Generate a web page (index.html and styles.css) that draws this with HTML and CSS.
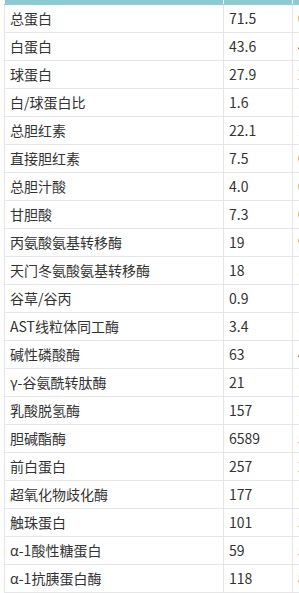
FILE: index.html
```html
<!DOCTYPE html>
<html lang="zh">
<head>
<meta charset="utf-8">
<link rel="stylesheet" href="styles.css">
</head>
<body>
<div class="viewport">
<table class="grid">
<thead>
<tr class="head"><th class="c-name"></th><th class="c-val"></th><th class="c-ref"></th></tr>
</thead>
<tbody>
<tr><td class="c-name">总蛋白</td><td class="c-val">71.5</td><td class="c-ref">0</td></tr>
<tr><td class="c-name">白蛋白</td><td class="c-val">43.6</td><td class="c-ref">4</td></tr>
<tr><td class="c-name">球蛋白</td><td class="c-val">27.9</td><td class="c-ref">2</td></tr>
<tr><td class="c-name">白/球蛋白比</td><td class="c-val">1.6</td><td class="c-ref">1</td></tr>
<tr><td class="c-name">总胆红素</td><td class="c-val">22.1</td><td class="c-ref">1</td></tr>
<tr><td class="c-name">直接胆红素</td><td class="c-val">7.5</td><td class="c-ref">0</td></tr>
<tr><td class="c-name">总胆汁酸</td><td class="c-val">4.0</td><td class="c-ref">0</td></tr>
<tr><td class="c-name">甘胆酸</td><td class="c-val">7.3</td><td class="c-ref">0</td></tr>
<tr><td class="c-name">丙氨酸氨基转移酶</td><td class="c-val">19</td><td class="c-ref">9</td></tr>
<tr><td class="c-name">天门冬氨酸氨基转移酶</td><td class="c-val">18</td><td class="c-ref">1</td></tr>
<tr><td class="c-name">谷草/谷丙</td><td class="c-val">0.9</td><td class="c-ref"></td></tr>
<tr><td class="c-name">AST线粒体同工酶</td><td class="c-val">3.4</td><td class="c-ref">1</td></tr>
<tr><td class="c-name">碱性磷酸酶</td><td class="c-val">63</td><td class="c-ref">4</td></tr>
<tr><td class="c-name">γ-谷氨酰转肽酶</td><td class="c-val">21</td><td class="c-ref">1</td></tr>
<tr><td class="c-name">乳酸脱氢酶</td><td class="c-val">157</td><td class="c-ref">1</td></tr>
<tr><td class="c-name">胆碱酯酶</td><td class="c-val">6589</td><td class="c-ref">5</td></tr>
<tr><td class="c-name">前白蛋白</td><td class="c-val">257</td><td class="c-ref">2</td></tr>
<tr><td class="c-name">超氧化物歧化酶</td><td class="c-val">177</td><td class="c-ref">1</td></tr>
<tr><td class="c-name">触珠蛋白</td><td class="c-val">101</td><td class="c-ref">3</td></tr>
<tr><td class="c-name">α-1酸性糖蛋白</td><td class="c-val">59</td><td class="c-ref">5</td></tr>
<tr><td class="c-name">α-1抗胰蛋白酶</td><td class="c-val">118</td><td class="c-ref">8</td></tr>
</tbody>
</table>
</div>
</body>
</html>
```

FILE: styles.css
```css
html, body {
  margin: 0;
  padding: 0;
  background: #ffffff;
}

.viewport {
  width: 299px;
  height: 593px;
  overflow: hidden;
  padding-left: 4px;
  box-sizing: border-box;
}

.grid {
  border-collapse: collapse;
  table-layout: fixed;
  width: 380px;
  font-family: "Noto Sans CJK SC", "Noto Sans", sans-serif;
  font-size: 14px;
  color: #333333;
}

.grid th,
.grid td {
  border: 1px solid #e6e6e6;
  padding: 0 0 0 5px;
  text-align: left;
  white-space: nowrap;
  overflow: hidden;
  box-sizing: border-box;
}

.grid .c-name { width: 219px; }
.grid .c-val { width: 69px; }
.grid .c-ref { width: 92px; }

.head th {
  height: 4px;
  background: #8ccbd1;
  border-top: none;
  border-bottom: 1px solid #8ccbd1;
  border-left: 1px solid #ffffff;
  border-right: 1px solid #ffffff;
  padding: 0;
}

.grid tbody td {
  height: 28px;
  line-height: 26px;
}

.grid tbody td.c-val {
  padding-left: 5px;
}
```
